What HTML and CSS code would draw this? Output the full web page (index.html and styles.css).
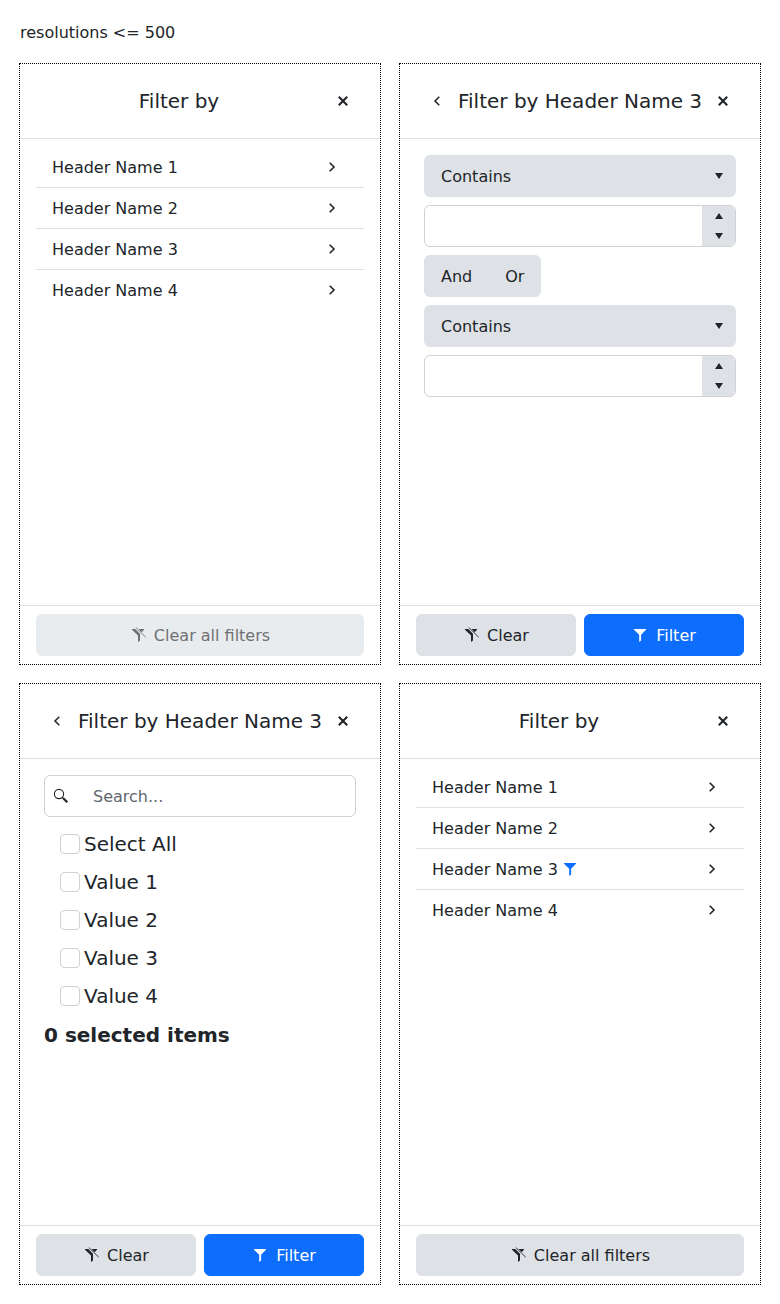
FILE: index.html
```html
<!DOCTYPE html>
<html lang="en">
<head>
<meta charset="utf-8">
<title>Filter menus</title>
<link rel="stylesheet" href="styles.css">
</head>
<body>
<svg class="sprite" width="0" height="0">
  <symbol id="close" viewBox="0 0 16 16"><path d="M3.8 3.8l8.4 8.4M12.2 3.8l-8.4 8.4" fill="none" stroke="currentColor" stroke-width="2.1"/></symbol>
  <symbol id="right" viewBox="0 0 16 16"><path d="M5.7 3.7L10 8l-4.3 4.3" fill="none" stroke="currentColor" stroke-width="1.6"/></symbol>
  <symbol id="left" viewBox="0 0 16 16"><path d="M10.3 3.7L6 8l4.3 4.3" fill="none" stroke="currentColor" stroke-width="1.5"/></symbol>
  <symbol id="down" viewBox="0 0 16 16"><path d="M4 5h8l-4 6z" fill="currentColor"/></symbol>
  <symbol id="up" viewBox="0 0 16 16"><path d="M4 11h8L8 5z" fill="currentColor"/></symbol>
  <symbol id="filter" viewBox="0 0 16 16"><path d="M2 2h12v.8L9.1 7.8V13.6L7.2 15V7.8L2 2.8z" fill="currentColor"/></symbol>
  <symbol id="filter-clear" viewBox="0 0 16 16"><path d="M1 2h3.3L9 6.7V13.4L7 15V8.4L1 2.8zM7.6 2H13v.8l-2.4 2.4z" fill="currentColor"/><path d="M4.8.5l9.9 9.7" fill="none" stroke="currentColor" stroke-width=".9"/></symbol>
  <symbol id="search" viewBox="0 0 16 16"><circle cx="6" cy="6" r="4.6" fill="none" stroke="currentColor" stroke-width="1.1"/><path d="M9.2 9.2l1.5 1.5" stroke="currentColor" stroke-width="1.3"/><path d="M10.2 10.2l4.1 4.1" stroke="currentColor" stroke-width="2.2"/></symbol>
</svg>
<p class="caption">resolutions &lt;= 500</p>
<main class="panels">
  <section class="panel">
    <header class="panel-header"><h2 class="title">Filter by</h2><button class="flat"><svg class="icon"><use href="#close"/></svg></button></header>
    <ul class="columns">
      <li class="column"><span class="label">Header Name 1</span><svg class="icon arrow"><use href="#right"/></svg></li>
      <li class="column"><span class="label">Header Name 2</span><svg class="icon arrow"><use href="#right"/></svg></li>
      <li class="column"><span class="label">Header Name 3</span><svg class="icon arrow"><use href="#right"/></svg></li>
      <li class="column"><span class="label">Header Name 4</span><svg class="icon arrow"><use href="#right"/></svg></li>
    </ul>
    <footer class="actions"><button class="btn" disabled><svg class="icon"><use href="#filter-clear"/></svg><span class="label">Clear all filters</span></button></footer>
  </section>

  <section class="panel">
    <header class="panel-header"><button class="flat"><svg class="icon"><use href="#left"/></svg></button><h2 class="title">Filter by Header Name 3</h2><button class="flat"><svg class="icon"><use href="#close"/></svg></button></header>
    <div class="form">
      <div class="dropdown"><span class="label">Contains</span><svg class="icon"><use href="#down"/></svg></div>
      <div class="numeric"><input class="numeric-input" type="text"><div class="spinner"><svg class="icon"><use href="#up"/></svg><svg class="icon"><use href="#down"/></svg></div></div>
      <div class="group"><button class="btn"><span class="label">And</span></button><button class="btn"><span class="label">Or</span></button></div>
      <div class="dropdown"><span class="label">Contains</span><svg class="icon"><use href="#down"/></svg></div>
      <div class="numeric"><input class="numeric-input" type="text"><div class="spinner"><svg class="icon"><use href="#up"/></svg><svg class="icon"><use href="#down"/></svg></div></div>
    </div>
    <footer class="actions"><button class="btn"><svg class="icon"><use href="#filter-clear"/></svg><span class="label">Clear</span></button><button class="btn primary"><svg class="icon"><use href="#filter"/></svg><span class="label">Filter</span></button></footer>
  </section>

  <section class="panel">
    <header class="panel-header"><button class="flat"><svg class="icon"><use href="#left"/></svg></button><h2 class="title">Filter by Header Name 3</h2><button class="flat"><svg class="icon"><use href="#close"/></svg></button></header>
    <div class="form">
      <div class="search"><svg class="icon"><use href="#search"/></svg><input class="search-input" type="text" placeholder="Search..."></div>
      <div class="values">
        <label class="value"><input class="check" type="checkbox">Select All</label>
        <label class="value"><input class="check" type="checkbox">Value 1</label>
        <label class="value"><input class="check" type="checkbox">Value 2</label>
        <label class="value"><input class="check" type="checkbox">Value 3</label>
        <label class="value"><input class="check" type="checkbox">Value 4</label>
        <div class="summary">0 selected items</div>
      </div>
    </div>
    <footer class="actions"><button class="btn"><svg class="icon"><use href="#filter-clear"/></svg><span class="label">Clear</span></button><button class="btn primary"><svg class="icon"><use href="#filter"/></svg><span class="label">Filter</span></button></footer>
  </section>

  <section class="panel">
    <header class="panel-header"><h2 class="title">Filter by</h2><button class="flat"><svg class="icon"><use href="#close"/></svg></button></header>
    <ul class="columns">
      <li class="column"><span class="label">Header Name 1</span><svg class="icon arrow"><use href="#right"/></svg></li>
      <li class="column"><span class="label">Header Name 2</span><svg class="icon arrow"><use href="#right"/></svg></li>
      <li class="column"><span class="label">Header Name 3</span><svg class="icon active"><use href="#filter"/></svg><svg class="icon arrow"><use href="#right"/></svg></li>
      <li class="column"><span class="label">Header Name 4</span><svg class="icon arrow"><use href="#right"/></svg></li>
    </ul>
    <footer class="actions"><button class="btn"><svg class="icon"><use href="#filter-clear"/></svg><span class="label">Clear all filters</span></button></footer>
  </section>
</main>
</body>
</html>
```
FILE: styles.css
```css
* { box-sizing: border-box; }
body {
  margin: 0;
  padding: 20px;
  background: #fff;
  color: #212529;
  font: 16px/24px "DejaVu Sans", sans-serif;
}
button, input { font: inherit; color: inherit; margin: 0; }
.sprite { display: none; }
.caption { margin: 0 0 19px; padding-top: 1px; }
.icon { display: block; width: 16px; height: 16px; flex: none; }
.label { padding-top: 2px; line-height: 24px; }
.panels { display: grid; grid-template-columns: 360px 360px; gap: 20px; }
.panel {
  display: flex;
  flex-direction: column;
  height: 600px;
  outline: 1px dotted #000;
}
.panel-header {
  display: flex;
  align-items: center;
  padding: 16px;
  border-bottom: 1px solid #dfe0e1;
}
.title {
  flex: 1;
  margin: 0;
  font-size: 20px;
  font-weight: 400;
  line-height: 30px;
  text-align: center;
  white-space: nowrap;
}
.flat { padding: 13px; border: 0; background: none; }
.columns { flex: 1; margin: 0; padding: 8px 16px; list-style: none; }
.column {
  display: flex;
  align-items: center;
  height: 41px;
  padding: 0 24px 0 16px;
  border-bottom: 1px solid #dfe0e1;
}
.column:last-child { height: 40px; border-bottom: 0; }
.arrow { margin-left: auto; }
.active { margin-left: 4px; color: #0d6efd; }
.actions {
  display: flex;
  gap: 8px;
  padding: 8px 16px;
  border-top: 1px solid #dfe0e1;
}
.btn {
  display: flex;
  align-items: center;
  justify-content: center;
  gap: 7px;
  height: 42px;
  padding: 0 16px;
  border: 1px solid #dee2e6;
  border-radius: 6px;
  background: #dee2e6;
}
.btn:disabled { opacity: .65; }
.actions .btn { flex: 1 1 0; min-width: 0; padding: 0 15px 0 16px; }
.actions .primary { gap: 8px; padding: 0 16px; border-color: #0d6efd; background: #0d6efd; color: #fff; }
.actions .btn:first-child:not(:last-child), .actions .primary { flex: none; width: 160px; }
.form {
  display: flex;
  flex: 1;
  flex-direction: column;
  gap: 8px;
  padding: 16px 24px;
}
.dropdown {
  display: flex;
  align-items: center;
  justify-content: space-between;
  height: 42px;
  padding: 0 9px 0 17px;
  border-radius: 6px;
  background: #dee2e6;
}
.numeric, .search {
  display: flex;
  height: 42px;
  overflow: hidden;
  border: 1px solid #d0d1d2;
  border-radius: 6px;
}
.numeric-input, .search-input {
  flex: 1;
  min-width: 0;
  height: 40px;
  padding: 8px 16px 7px;
  border: 0;
  background: none;
  outline: 0;
}
.spinner {
  display: flex;
  flex-direction: column;
  justify-content: space-between;
  align-items: center;
  width: 33px;
  padding: 2px 0;
  background: #dee2e6;
}
.group { display: flex; }
.group .btn:first-child { border-radius: 6px 0 0 6px; }
.group .btn:last-child { margin-left: -1px; border-radius: 0 6px 6px 0; }
.search { align-items: center; padding-left: 8px; }
.search-input { margin-left: 8px; }
.search-input::placeholder { color: #5f666d; opacity: 1; }
.values { font-size: 20px; line-height: 30px; }
.value { display: flex; align-items: center; gap: 4px; padding: 4px 16px; }
.check {
  appearance: none;
  width: 20px;
  height: 20px;
  border: 1px solid #d0d1d2;
  border-radius: 4px;
  background: #fff;
}
.summary { padding-top: 5px; font-weight: 700; }
```
